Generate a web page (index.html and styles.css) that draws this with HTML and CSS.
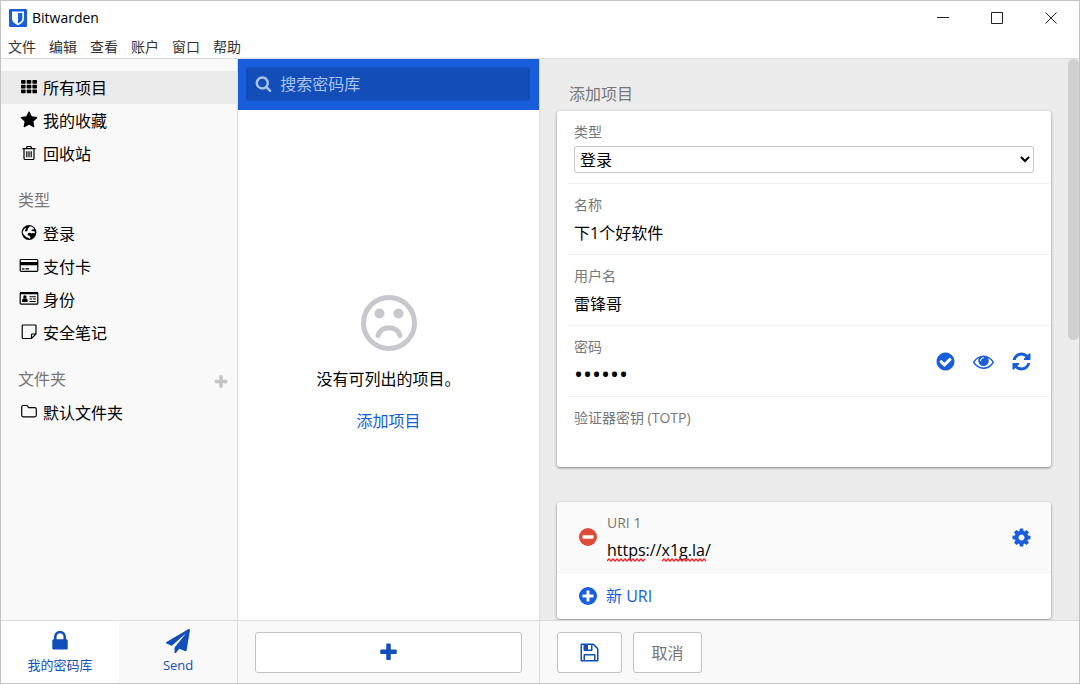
FILE: index.html
```html
<!DOCTYPE html>
<html lang="zh-CN">
<head>
<meta charset="utf-8">
<title>Bitwarden</title>
<link rel="stylesheet" href="styles.css">
</head>
<body>
<svg class="defs" aria-hidden="true">
  <symbol id="i-plus" viewBox="0 0 1792 1792"><path d="M1600 736v192q0 40-28 68t-68 28h-416v416q0 40-28 68t-68 28h-192q-40 0-68-28t-28-68v-416h-416q-40 0-68-28t-28-68v-192q0-40 28-68t68-28h416v-416q0-40 28-68t68-28h192q40 0 68 28t28 68v416h416q40 0 68 28t28 68z"/></symbol>
</svg>
<div class="window">
  <header class="titlebar">
    <div class="title-row">
      <svg class="logo" viewBox="0 0 18 18" aria-hidden="true"><rect width="18" height="18" rx="1" fill="#175ddc"/><path d="M3 2.500h12v7.300c0 3-3.200 5.300-6 6.400-2.800-1.100-6-3.400-6-6.400z" fill="#fff"/><path d="M9 4h4.300v5.700c0 2-2.200 3.700-4.300 4.800z" fill="#175ddc"/></svg>
      <h1 class="app-name">Bitwarden</h1>
      <div class="window-buttons">
        <button type="button" aria-label="最小化"><svg viewBox="0 0 12 12"><path d="M0 5.500h12"/></svg></button>
        <button type="button" aria-label="最大化"><svg viewBox="0 0 12 12"><path d="M.5 .5h11v11h-11z"/></svg></button>
        <button type="button" aria-label="关闭"><svg viewBox="0 0 12 12"><path d="M.5 .5l11 11M11.500 .5l-11 11"/></svg></button>
      </div>
    </div>
    <nav class="menubar">
      <button type="button">文件</button><button type="button">编辑</button><button type="button">查看</button><button type="button">账户</button><button type="button">窗口</button><button type="button">帮助</button>
    </nav>
  </header>
  <div class="panes">
    <aside class="sidebar">
      <nav class="groups">
        <ul class="list">
          <li><a class="item active" href="#"><svg class="icon" viewBox="0 0 18 18"><rect x="1" y="2" width="4.600" height="3.700" rx=".7"/><rect x="6.700" y="2" width="4.600" height="3.700" rx=".7"/><rect x="12.400" y="2" width="4.600" height="3.700" rx=".7"/><rect x="1" y="6.800" width="4.600" height="3.700" rx=".7"/><rect x="6.700" y="6.800" width="4.600" height="3.700" rx=".7"/><rect x="12.400" y="6.800" width="4.600" height="3.700" rx=".7"/><rect x="1" y="11.600" width="4.600" height="3.700" rx=".7"/><rect x="6.700" y="11.600" width="4.600" height="3.700" rx=".7"/><rect x="12.400" y="11.600" width="4.600" height="3.700" rx=".7"/></svg>所有项目</a></li>
          <li><a class="item" href="#"><svg class="icon" viewBox="0 0 1792 1792"><path d="M1728 647q0 22-26 48l-363 354 86 500q1 7 1 20 0 21-10.500 35.500t-30.500 14.500q-19 0-40-12l-449-236-449 236q-22 12-40 12-21 0-31.500-14.500t-10.500-35.500q0-6 2-20l86-500-364-354q-25-27-25-48 0-37 56-46l502-73 225-455q19-41 49-41t49 41l225 455 502 73q56 9 56 46z"/></svg>我的收藏</a></li>
          <li><a class="item" href="#"><svg class="icon" viewBox="0 0 18 18"><path class="line" d="M2.500 4.600h13M6.300 4.400l.8-1.900h3.800l.8 1.900M4 5v9.200q0 1.300 1.200 1.300h7.600q1.200 0 1.200-1.300V5M6.800 7.200v6M9 7.200v6M11.200 7.200v6"/></svg>回收站</a></li>
        </ul>
        <h2 class="group-title">类型</h2>
        <ul class="list">
          <li><a class="item" href="#"><svg class="icon" viewBox="0 0 18 18"><circle cx="9" cy="8.500" r="7.400"/><path fill="#f9f9f9" d="M10 2.300l2 .5 2 1.700-.3 1-1.700-.1-.8 1 1.300.8 1.500-.1.900.8-.2 1.300-1.800-.3-1.300.6-1.400-.8-1.700.2-.9 1.300.5 1.300 1.700.5.600 1.400-.5 1.500-1.500-1.200-2-.5-1.800-1.600-1.900-2.400.1-1.800 1.500-2.600 1.300-.9.300 1.100-1 1.300.6 1.300 1-.1 1.400-1.600-.2-1.300 1-.8z"/></svg>登录</a></li>
          <li><a class="item" href="#"><svg class="icon wide" viewBox="0 0 20 18"><path class="line" d="M2.200 2.500h15.600q1 0 1 1v9.800q0 1-1 1H2.200q-1 0-1-1V3.500q0-1 1-1z"/><path d="M1 5h18v3.200H1zM3 11.300h2.500v1.200H3zM6.500 11.300H10v1.200H6.500z"/></svg>支付卡</a></li>
          <li><a class="item" href="#"><svg class="icon wide" viewBox="0 0 20 18"><path class="line" d="M2.200 2.600h15.600q1 0 1 1v9.600q0 1-1 1H2.200q-1 0-1-1V3.600q0-1 1-1z"/><path d="M1 2h18v2.200H1zM3.200 12v-1.700q0-1.700 1.400-2 1.300.9 2.500 0 1.500.3 1.500 2V12z"/><circle cx="5.900" cy="6.900" r="1.700"/><path d="M10.500 6.300h6.300v1h-6.300zM10.500 8.600H13v1h-2.500zM14 8.600h2.800v1H14zM10.500 10.900h6.300v1h-6.300z"/></svg>身份</a></li>
          <li><a class="item" href="#"><svg class="icon" viewBox="0 0 18 18"><path class="line" d="M3 2h12.500q.5 0 .5.500V11l-4.500 4.500H3q-.8 0-.8-.8V2.800Q2.200 2 3 2zM16 11h-3.700q-.8 0-.8.800v3.500"/></svg>安全笔记</a></li>
        </ul>
        <div class="group-head">
          <h2 class="group-title">文件夹</h2>
          <button type="button" class="add-folder" aria-label="添加文件夹"><svg><use href="#i-plus"/></svg></button>
        </div>
        <ul class="list">
          <li><a class="item" href="#"><svg class="icon" viewBox="0 0 18 18"><path class="line" d="M3.200 2.500h3.600q1.200 0 1.200 1.200v.4q0 .5.500.5h6.300q1.500 0 1.500 1.500v6.200q0 1.500-1.500 1.500H3.200q-1.500 0-1.500-1.500V4q0-1.500 1.500-1.500z"/></svg>默认文件夹</a></li>
        </ul>
      </nav>
      <nav class="footer tabs">
        <a class="tab current" href="#"><svg viewBox="0 0 1792 1792"><path d="M640 768h512v-192q0-106-75-181t-181-75-181 75-75 181v192zm832 96v576q0 40-28 68t-68 28h-960q-40 0-68-28t-28-68v-576q0-40 28-68t68-28h32v-192q0-184 132-316t316-132 316 132 132 316v192h32q40 0 68 28t28 68z"/></svg>我的密码库</a>
        <a class="tab" href="#"><svg viewBox="0 0 1792 1792"><path d="M1764 11q33 24 27 64l-256 1536q-5 29-32 45-14 8-31 8-11 0-24-5l-453-185-242 295q-18 23-49 23-13 0-22-4-19-7-30.500-23.500t-11.500-36.500v-349l864-1059-1069 925-395-162q-37-14-40-55-2-40 32-59l1664-960q15-9 32-9 20 0 36 11z"/></svg>Send</a>
      </nav>
    </aside>
    <section class="vault">
      <div class="search-bar">
        <label class="search">
          <svg viewBox="0 0 1792 1792" aria-hidden="true"><path d="M1216 832q0-185-131.500-316.500t-316.500-131.500-316.500 131.500-131.500 316.500 131.500 316.500 316.500 131.500 316.500-131.500 131.500-316.500zm512 832q0 52-38 90t-90 38q-54 0-90-38l-343-342q-179 124-399 124-143 0-273.500-55.500t-225-150-150-225-55.500-273.500 55.500-273.500 150-225 225-150 273.500-55.500 273.500 55.500 225 150 150 225 55.500 273.500q0 220-124 399l343 343q37 37 37 90z"/></svg>
          <input type="search" placeholder="搜索密码库" aria-label="搜索密码库">
        </label>
      </div>
      <div class="empty">
        <svg class="frown" viewBox="0 0 56 56" aria-hidden="true"><circle cx="28" cy="28" r="25.500"/><path d="M17 40.500c3-10.500 19-10.500 22 0"/><circle class="dot" cx="18.500" cy="18.500" r="5"/><circle class="dot" cx="37.500" cy="18.500" r="5"/></svg>
        <p>没有可列出的项目。</p>
        <a class="add-link" href="#">添加项目</a>
      </div>
      <div class="footer vault-footer">
        <button type="button" class="btn grow" aria-label="添加项目"><svg><use href="#i-plus"/></svg></button>
      </div>
    </section>
    <main class="details">
      <form class="scroll" id="item-form">
        <h2 class="form-title">添加项目</h2>
        <div class="card">
          <div class="row">
            <label for="type">类型</label>
            <select id="type"><option>登录</option></select>
          </div>
          <div class="row">
            <label for="name">名称</label>
            <input id="name" type="text" value="下1个好软件">
          </div>
          <div class="row">
            <label for="user">用户名</label>
            <input id="user" type="text" value="雷锋哥">
          </div>
          <div class="row split">
            <div class="field">
              <label for="password">密码</label>
              <input id="password" class="secret" type="password" value="abcdef">
            </div>
            <div class="actions">
              <button type="button" aria-label="检查密码"><svg viewBox="0 0 1792 1792"><path d="M1412 734q0-28-18-46l-91-90q-19-19-45-19t-45 19l-408 407-226-226q-19-19-45-19t-45 19l-91 90q-18 18-18 46 0 27 18 45l362 362q19 19 45 19 27 0 46-19l543-543q18-18 18-45zm252 162q0 209-103 385.500t-279.500 279.500-385.500 103-385.500-103-279.500-279.500-103-385.500 103-385.500 279.500-279.500 385.500-103 385.500 103 279.500 279.500 103 385.500z"/></svg></button>
              <button type="button" aria-label="显示密码"><svg viewBox="0 0 1792 1792"><path d="M1664 960q-152-236-381-353 61 104 61 225 0 185-131.500 316.500t-316.500 131.500-316.500-131.500-131.500-316.500q0-121 61-225-229 117-381 353 133 205 333.500 326.500t434.500 121.500 434.500-121.500 333.500-326.500zm-720-384q0-20-14-34t-34-14q-125 0-214.500 89.500t-89.500 214.500q0 20 14 34t34 14 34-14 14-34q0-86 61-147t147-61q20 0 34-14t14-34zm848 384q0 34-20 69-140 230-376.500 368.500t-499.500 138.500-499.500-139-376.500-368q-20-35-20-69t20-69q140-229 376.500-368t499.500-139 499.500 139 376.500 368q20 35 20 69z"/></svg></button>
              <button type="button" aria-label="生成密码"><svg viewBox="0 0 1792 1792"><path d="M1639 1056q0 5-1 7-64 268-268 434.500t-478 166.500q-146 0-282.500-55t-243.500-157l-129 129q-19 19-45 19t-45-19-19-45v-448q0-26 19-45t45-19h448q26 0 45 19t19 45-19 45l-137 137q71 66 161 102t187 36q134 0 250-65t186-179q11-17 53-117 8-23 30-23h192q13 0 22.500 9.500t9.500 22.500zm25-800v448q0 26-19 45t-45 19h-448q-26 0-45-19t-19-45 19-45l138-138q-148-137-349-137-134 0-250 65t-186 179q-11 17-53 117-8 23-30 23h-199q-13 0-22.500-9.500t-9.500-22.500v-7q65-268 270-434.500t480-166.500q146 0 284 55.500t245 156.500l130-129q19-19 45-19t45 19 19 45z"/></svg></button>
            </div>
          </div>
          <div class="row">
            <label for="totp">验证器密钥 (TOTP)</label>
            <input id="totp" type="text">
          </div>
        </div>
        <div class="card">
          <div class="uri-row">
            <button type="button" class="round danger" aria-label="移除"><svg viewBox="0 0 18 18"><circle cx="9" cy="9" r="9"/><rect x="3.500" y="7.200" width="11" height="3.600" rx=".8" fill="#fff"/></svg></button>
            <div class="row split">
              <div class="field">
                <label for="uri">URI 1</label>
                <div class="spell">
                  <input id="uri" type="text" value="https://x1g.la/">
                  <svg class="squiggle" viewBox="0 0 106 4" aria-hidden="true"><path d="M0 3l2-2 2 2 2-2 2 2 2-2 2 2 2-2 2 2 2-2 2 2 2-2 2 2 2-2 2 2 2-2 2 2 2-2 2 2 2-2M55 3l2-2 2 2 2-2 2 2 2-2 2 2 2-2 2 2 2-2 2 2 2-2 2 2 2-2 2 2 2-2 2 2 2-2 2 2 2-2 2 2 2-2 2 2"/></svg>
                </div>
              </div>
              <div class="actions">
                <button type="button" aria-label="选项"><svg viewBox="0 0 1792 1792"><path d="M1152 896q0-106-75-181t-181-75-181 75-75 181 75 181 181 75 181-75 75-181zm512-109v222q0 12-8 23t-20 13l-185 28q-19 54-39 91 35 50 107 138 10 12 10 25t-9 23q-27 37-99 108t-94 71q-12 0-26-9l-138-108q-44 23-91 38-16 136-29 186-7 28-36 28h-222q-14 0-24.500-8.500t-11.500-21.500l-28-184q-49-16-90-37l-141 107q-10 9-25 9-14 0-25-11-126-114-165-168-7-10-7-23 0-12 8-23 15-21 51-66.500t54-70.500q-27-50-41-99l-183-27q-13-2-21-12.500t-8-23.500v-222q0-12 8-23t19-13l186-28q14-46 39-92-40-57-107-138-10-12-10-24 0-10 9-23 26-36 98.500-107.500t94.500-71.500q13 0 26 10l138 107q44-23 91-38 16-136 29-186 7-28 36-28h222q14 0 24.500 8.500t11.500 21.500l28 184q49 16 90 37l142-107q9-9 24-9 13 0 25 10 129 119 165 170 7 8 7 22 0 12-8 23-15 21-51 66.500t-54 70.500q26 50 41 98l183 28q13 2 21 12.500t8 23.500z"/></svg></button>
              </div>
            </div>
          </div>
          <button type="button" class="new-uri"><svg viewBox="0 0 18 18"><circle cx="9" cy="9" r="9"/><path fill="#fff" d="M7.500 3.500h3v4h4v3h-4v4h-3v-4h-4v-3h4z"/></svg>新 URI</button>
        </div>
      </form>
      <div class="scroll-thumb"></div>
      <div class="footer detail-footer">
        <button type="submit" form="item-form" class="btn save" aria-label="保存"><svg viewBox="0 0 1792 1792"><path d="M512 1536h768v-384h-768v384zm896 0h128v-896q0-14-10-38.500t-20-34.500l-281-281q-10-10-34-20t-39-10v416q0 40-28 68t-68 28h-576q-40 0-68-28t-28-68v-416h-128v1280h128v-416q0-40 28-68t68-28h832q40 0 68 28t28 68v416zm-384-928v-320q0-13-9.500-22.500t-22.500-9.500h-192q-13 0-22.500 9.500t-9.500 22.500v320q0 13 9.500 22.500t22.500 9.500h192q13 0 22.500-9.500t9.500-22.500zm640 32v928q0 40-28 68t-68 28h-1344q-40 0-68-28t-28-68v-1344q0-40 28-68t68-28h928q40 0 88 20t76 48l280 280q28 28 48 76t20 88z"/></svg></button>
        <button type="button" class="btn cancel">取消</button>
      </div>
    </main>
  </div>
</div>
</body>
</html>
```
FILE: styles.css
```css
* { box-sizing: border-box; }
body {
  margin: 0;
  font: 16px/24px "Open Sans", "Noto Sans CJK SC", sans-serif;
  color: #000;
}
button, input, select { font: inherit; color: inherit; }
button { border: 0; padding: 0; background: none; }
a { text-decoration: none; color: inherit; }
h1, h2, p, ul { margin: 0; padding: 0; font-size: inherit; font-weight: 400; list-style: none; }
svg { display: block; flex: none; fill: currentColor; }
.defs { position: absolute; width: 0; height: 0; }

.window {
  height: 100vh;
  display: flex;
  flex-direction: column;
  border: 1px solid #c3c3c3;
  background: #fff;
}
.titlebar { border-bottom: 1px solid #dcdcdc; }
.title-row { display: flex; align-items: center; gap: 5px; height: 34px; padding: 0 22px 0 8px; }
.logo { width: 18px; height: 18px; }
.app-name { flex: 1; font-size: 14px; }
.window-buttons { display: flex; gap: 42px; }
.window-buttons svg { width: 12px; height: 12px; fill: none; stroke: #222; stroke-width: 1; }
.menubar { display: flex; gap: 13px; height: 23px; padding-left: 7px; }
.menubar button { font-size: 14px; line-height: 23px; color: #333; }

.panes { flex: 1; min-height: 0; display: flex; }
.sidebar { flex: 0 0 22%; display: flex; flex-direction: column; border-right: 1px solid #dcdcdc; background: #f9f9f9; }
.groups { flex: 1; min-height: 0; padding-top: 12px; overflow: hidden; }
.list { display: grid; }
.item { display: flex; align-items: center; gap: 4px; height: 33px; padding-left: 18px; }
.item.active { background: #ebebeb; }
.icon { width: 20px; height: 18px; margin-bottom: 2px; }
.line { fill: none; stroke: currentColor; stroke-width: 1.2; }
.group-title { padding: 18px 0 5px 17px; color: #777; }
.group-head { display: flex; align-items: center; justify-content: space-between; padding-right: 8px; }
.add-folder { margin-top: 18px; color: #c4c4c4; }
.add-folder svg { width: 16px; height: 16px; }

.footer { height: 63px; flex: none; display: flex; border-top: 1px solid #dcdcdc; background: #f9f9f9; color: #124eb9; }
.tab { flex: 1; display: flex; flex-direction: column; align-items: center; padding-top: 8px; font-size: 13px; line-height: 20px; gap: 2px; }
.tab svg { width: 24px; height: 24px; }
.tab.current { background: #fff; }

.vault { flex: 0 0 28%; display: flex; flex-direction: column; border-right: 1px solid #dcdcdc; }
.search-bar { padding: 8px 9px 9px 8px; background: #175ddc; }
.search { display: flex; align-items: center; gap: 8px; height: 34px; padding: 0 9px; border-radius: 3px; background: #134eb8; color: #a9c2f1; }
.search svg { width: 17px; height: 17px; margin-bottom: 2px; }
.search input { flex: 1; min-width: 0; border: 0; padding: 0; background: none; outline: 0; }
.search input::placeholder { color: #a9c2f1; }
.empty { flex: 1; display: flex; flex-direction: column; align-items: center; justify-content: center; padding-bottom: 2px; }
.frown { width: 56px; height: 56px; margin-bottom: 16px; fill: none; stroke: #c7c7cd; stroke-width: 5; stroke-linecap: round; }
.frown .dot { fill: #c7c7cd; stroke: none; }
.add-link { margin-top: 18px; color: #175ddc; }
.vault-footer { padding: 11px 17px; }
.btn { height: 41px; border: 1px solid #c2c2c2; border-radius: 3px; background: #fff; display: flex; align-items: center; justify-content: center; }
.grow { flex: 1; }
.btn svg { width: 21px; height: 21px; }

.details { flex: 1; min-width: 0; position: relative; display: flex; flex-direction: column; background: #ececec; }
.scroll { flex: 1; min-height: 0; overflow: hidden; padding: 23px 28px 0 17px; }
.scroll-thumb { position: absolute; top: 0; right: 0; width: 11px; height: 281px; border-radius: 6px; background: #cfcfcf; }
.form-title { padding: 0 12px 5px; color: #777; }
.card { margin-bottom: 35px; border-radius: 3px; background: #fff; box-shadow: 0 1px 3px rgba(0, 0, 0, .45); overflow: hidden; }
.row { margin-left: 11px; padding: 11px 17px 10px 6px; border-bottom: 1px solid #f2f2f2; }
.row:last-child { border-bottom: 0; }
.row label { display: block; margin-bottom: 4px; font-size: 14px; line-height: 20px; color: #777; }
.row input { display: block; width: 100%; height: 25px; padding: 0; border: 0; background: none; outline: 0; }
.row .secret { font-size: 24px; }
.row select { display: block; width: 100%; height: 27px; padding: 0 1px; border: 1px solid #c8c8c8; border-radius: 3px; background: #fff; }
.split { display: flex; align-items: center; }
.field { flex: 1; min-width: 0; }
.actions { display: flex; gap: 17px; margin-right: 2px; color: #175ddc; }
.actions svg { width: 21px; height: 21px; }
.uri-row { display: flex; align-items: center; padding-left: 22px; border-bottom: 1px solid #f2f2f2; background: #fbfbfb; }
.uri-row .row { flex: 1; margin-left: 4px; }
.round svg, .new-uri svg { width: 18px; height: 18px; }
.danger { color: #dd4b39; }
.spell { position: relative; }
.squiggle { position: absolute; left: 0; bottom: 0; width: 106px; height: 4px; fill: none; stroke: #f22; stroke-width: 1.4; }
.new-uri { display: flex; align-items: center; gap: 9px; width: 100%; height: 46px; padding-left: 22px; color: #175ddc; }
.detail-footer { gap: 11px; padding: 11px 17px; }
.save { width: 65px; }
.cancel { width: 69px; color: #777; }
```
